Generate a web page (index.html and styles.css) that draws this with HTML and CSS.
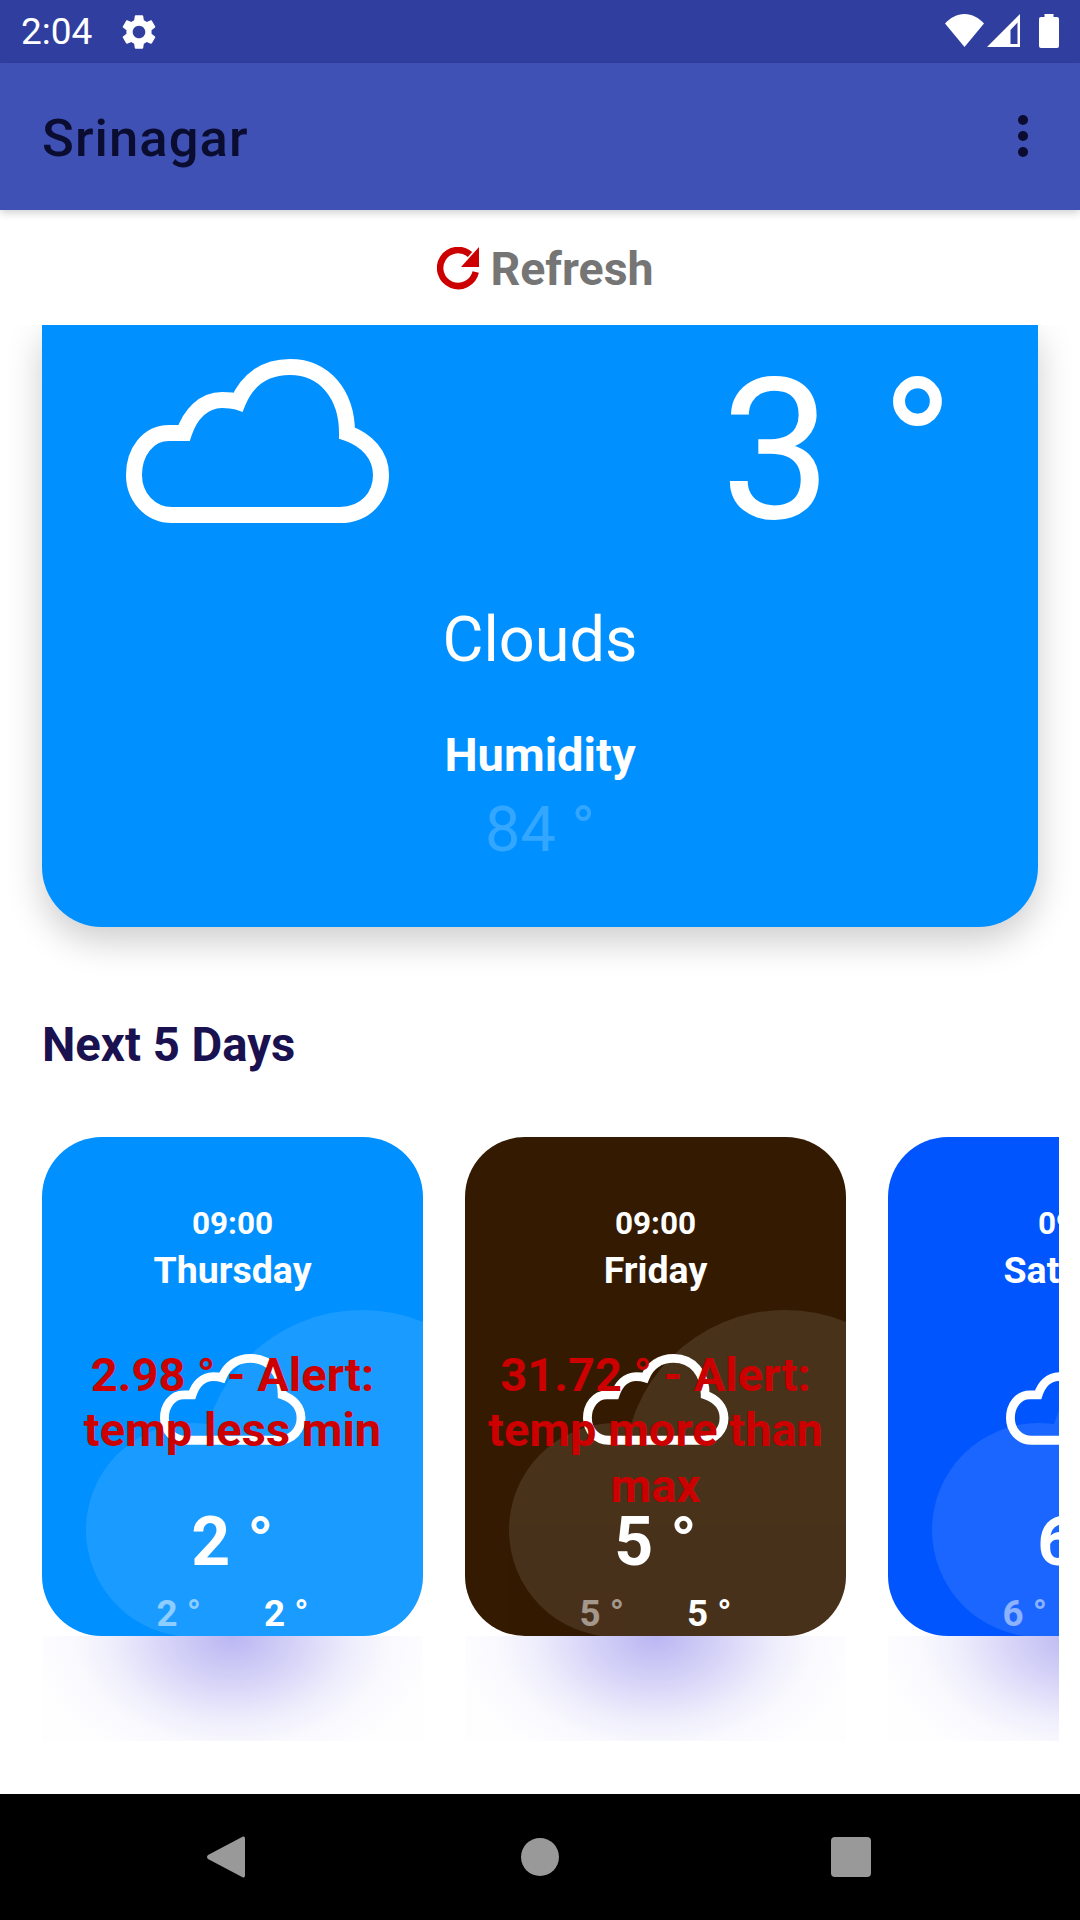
FILE: index.html
```html
<!DOCTYPE html>
<html lang="en">
<head>
<meta charset="utf-8">
<title>Srinagar</title>
<link rel="stylesheet" href="styles.css">
</head>
<body>
<svg class="defs" width="0" height="0" aria-hidden="true">
  <defs>
    <symbol id="cloud" viewBox="126 358 264 165">
      <path d="M172 515H340C366 515 381 496 381 475C381 455 367 440 347 433C347 395 325 367 290 367C265 367 247 380 238 402C232 400 227 400 222 400C203 400 190 415 184 433C179 433 174 433 169 433C148 433 134 452 134 475C134 497 150 515 172 515Z" fill="none" stroke="#fff" stroke-width="16"/>
    </symbol>
    <symbol id="blob" viewBox="0 0 381 499" preserveAspectRatio="none">
      <g fill="#fff" opacity="0.1">
        <circle cx="320" cy="334" r="161"/>
        <circle cx="151" cy="393" r="107"/>
        <rect x="151" y="334" width="230" height="165"/>
      </g>
    </symbol>
  </defs>
</svg>
<div class="statusbar">
  <span class="clock">2:04</span>
  <svg class="gear" viewBox="0 0 24 24"><path fill="#fff" d="M19.14,12.94c0.04,-0.3 0.06,-0.61 0.06,-0.94c0,-0.32 -0.02,-0.64 -0.07,-0.94l2.03,-1.58c0.18,-0.14 0.23,-0.41 0.12,-0.61l-1.92,-3.32c-0.12,-0.22 -0.37,-0.29 -0.59,-0.22l-2.39,0.96c-0.5,-0.38 -1.03,-0.7 -1.62,-0.94L14.4,2.81c-0.04,-0.24 -0.24,-0.41 -0.48,-0.41h-3.84c-0.24,0 -0.43,0.17 -0.47,0.41L9.25,5.35C8.66,5.59 8.12,5.92 7.63,6.29L5.24,5.33c-0.22,-0.08 -0.47,0 -0.59,0.22L2.74,8.87C2.62,9.08 2.66,9.34 2.86,9.48l2.03,1.58C4.84,11.36 4.8,11.69 4.8,12s0.02,0.64 0.07,0.94l-2.03,1.58c-0.18,0.14 -0.23,0.41 -0.12,0.61l1.92,3.32c0.12,0.22 0.37,0.29 0.59,0.22l2.39,-0.96c0.5,0.38 1.03,0.7 1.62,0.94l0.36,2.54c0.05,0.24 0.24,0.41 0.48,0.41h3.84c0.24,0 0.44,-0.17 0.47,-0.41l0.36,-2.54c0.59,-0.24 1.13,-0.56 1.62,-0.94l2.39,0.96c0.22,0.08 0.47,0 0.59,-0.22l1.92,-3.32c0.12,-0.22 0.07,-0.47 -0.12,-0.61L19.14,12.94zM12,15.6c-1.98,0 -3.6,-1.62 -3.6,-3.6s1.62,-3.6 3.6,-3.6s3.6,1.62 3.6,3.6S13.98,15.6 12,15.6z"/></svg>
  <span class="spacer"></span>
  <svg class="wifi" viewBox="0 0 39 33"><path fill="#fff" d="M19.5 33L0 9.5C5 4 12 0 19.5 0S34 4 39 9.5Z"/></svg>
  <svg class="signal" viewBox="0 0 33 33"><path fill="#fff" fill-rule="evenodd" d="M33 0V33H0ZM23.500 30H30.500V8.500L23.500 16Z"/></svg>
  <svg class="battery" viewBox="0 0 20 34"><path fill="#fff" d="M5.500 0H14.500V3H18A2 2 0 0 1 20 5V32A2 2 0 0 1 18 34H2A2 2 0 0 1 0 32V5A2 2 0 0 1 2 3H5.500Z"/></svg>
</div>
<header class="appbar">
  <h1 class="title">Srinagar</h1>
  <div class="menu"><i></i><i></i><i></i></div>
</header>
<main class="content">
  <div class="refresh">
    <svg class="refresh-icon" viewBox="0 0 43 43">
      <path d="M33 7.500A18 18 0 1 0 38.700 25" fill="none" stroke="#cc0000" stroke-width="6.5"/>
      <path d="M42 0V20H24Z" fill="#cc0000"/>
    </svg>
    <span class="refresh-label">Refresh</span>
  </div>
  <section class="hero">
    <div class="hero-top">
      <svg class="hero-cloud"><use href="#cloud"/></svg>
      <div class="hero-temp">3 °</div>
    </div>
    <div class="hero-cond">Clouds</div>
    <div class="hero-hum">Humidity</div>
    <div class="hero-humval">84 °</div>
  </section>
  <h2 class="next">Next 5 Days</h2>
  <div class="days">
    <div class="day">
      <article class="card card-blue">
        <svg class="blob"><use href="#blob"/></svg>
        <div class="time">09:00</div>
        <div class="weekday">Thursday</div>
        <div class="mid">
          <svg class="mini-cloud"><use href="#cloud"/></svg>
          <div class="alert">2.98 ° - Alert: temp less min</div>
        </div>
        <div class="temp">2 °</div>
        <div class="range"><span class="low">2 °</span><span>2 °</span></div>
      </article>
      <div class="glow"></div>
    </div>
    <div class="day">
      <article class="card card-brown">
        <svg class="blob"><use href="#blob"/></svg>
        <div class="time">09:00</div>
        <div class="weekday">Friday</div>
        <div class="mid">
          <svg class="mini-cloud"><use href="#cloud"/></svg>
          <div class="alert">31.72 ° - Alert: temp more than max</div>
        </div>
        <div class="temp">5 °</div>
        <div class="range"><span class="low">5 °</span><span>5 °</span></div>
      </article>
      <div class="glow"></div>
    </div>
    <div class="day">
      <article class="card card-royal">
        <svg class="blob"><use href="#blob"/></svg>
        <div class="time">09:00</div>
        <div class="weekday">Saturday</div>
        <div class="mid">
          <svg class="mini-cloud"><use href="#cloud"/></svg>
        </div>
        <div class="temp">6 °</div>
        <div class="range"><span class="low">6 °</span><span>6 °</span></div>
      </article>
      <div class="glow"></div>
    </div>
  </div>
</main>
<nav class="navbar">
  <svg class="nav-back" viewBox="0 0 38 42"><path fill="#999" d="M36 0.500Q38 0 38 2.500V39.500Q38 42 36 41.500L1 23Q-1 21 1 19Z"/></svg>
  <span class="nav-home"></span>
  <span class="nav-recent"></span>
</nav>
</body>
</html>
```
FILE: styles.css
```css
* { box-sizing: border-box; }
html, body { margin: 0; padding: 0; }
body {
  width: 1080px;
  height: 1920px;
  display: flex;
  flex-direction: column;
  overflow: hidden;
  background: #fff;
  font-family: Roboto, "Noto Sans", sans-serif;
}
.defs { position: absolute; }

.statusbar {
  height: 63px;
  flex: none;
  background: #303f9f;
  display: flex;
  align-items: center;
  padding: 0 21px;
  color: #fff;
}
.clock { font-size: 37px; line-height: 63px; }
.gear { width: 42px; height: 42px; margin-left: 26px; }
.spacer { flex: 1; }
.wifi { width: 39px; height: 33px; margin-top: -3px; }
.signal { width: 33px; height: 33px; margin-left: 3px; margin-top: -3px; }
.battery { width: 20px; height: 34px; margin-left: 19px; margin-top: -2px; }

.appbar {
  height: 147px;
  flex: none;
  background: #3f51b5;
  display: flex;
  align-items: center;
  justify-content: space-between;
  padding: 0 52px 0 42px;
  position: relative;
  z-index: 2;
  box-shadow: 0 3px 8px rgba(0, 0, 0, .18);
}
.title {
  margin: 0;
  font-size: 52.5px;
  font-weight: 500;
  color: #0a0c30;
  letter-spacing: 1.1px;
  position: relative;
  top: 1px;
}
.menu { display: flex; flex-direction: column; gap: 5.5px; margin-top: -1px; }
.menu i { width: 10.5px; height: 10.5px; border-radius: 50%; background: #0a0c30; display: block; }

.content { flex: 1; min-height: 0; overflow: hidden; }

.refresh {
  height: 115px;
  background: #fff;
  display: flex;
  align-items: center;
  justify-content: center;
  gap: 10px;
  position: relative;
  z-index: 1;
  padding: 2px 0 0 11px;
}
.refresh-icon { width: 43px; height: 43px; }
.refresh-label { font-size: 46.5px; font-weight: 700; color: #757575; }

.hero {
  margin: 0 42px;
  height: 602px;
  background: #0090ff;
  border-radius: 0 0 60px 60px;
  box-shadow: 0 14px 36px rgba(0, 0, 0, .2);
  color: #fff;
  text-align: center;
}
.hero-top {
  display: flex;
  justify-content: space-between;
  padding: 33px 84px 0 84px;
  height: 278px;
}
.hero-cloud { width: 264px; height: 165px; }
.hero-temp { font-size: 197px; line-height: 186px; font-weight: 400; }
.hero-cond { font-size: 63px; line-height: 74px; font-weight: 400; }
.hero-hum { font-size: 47px; line-height: 54px; font-weight: 700; margin-top: 51px; }
.hero-humval { font-size: 63px; line-height: 74px; font-weight: 400; opacity: .2; margin-top: 11px; }

.next {
  margin: 91px 0 0 42px;
  font-size: 47.25px;
  line-height: 54px;
  font-weight: 700;
  color: #1a1150;
}

.days {
  display: flex;
  gap: 42px;
  width: 1059px;
  padding-left: 42px;
  margin-top: 65px;
  overflow: hidden;
}
.day { flex: none; width: 381px; }
.card {
  position: relative;
  height: 499px;
  border-radius: 60px;
  overflow: hidden;
  color: #fff;
  text-align: center;
  padding-top: 68px;
}
.card-blue { background: #0090ff; }
.card-brown { background: #341a00; }
.card-royal { background: #0055ff; }
.blob { position: absolute; inset: 0; width: 100%; height: 100%; }
.time, .weekday, .mid, .temp, .range { position: relative; }
.time { font-size: 31.5px; line-height: 37px; font-weight: 700; }
.weekday { font-size: 37.5px; line-height: 43px; font-weight: 700; margin-top: 7px; }
.mid { height: 210px; }
.mini-cloud {
  position: absolute;
  left: 118px;
  top: 61px;
  width: 146px;
  height: 92px;
}
.alert {
  position: relative;
  padding: 55px 21px 0;
  font-size: 47px;
  line-height: 55.4px;
  font-weight: 700;
  color: #cc0000;
}
.temp { font-size: 68px; line-height: 80px; font-weight: 700; }
.range {
  display: flex;
  justify-content: center;
  gap: 63px;
  font-size: 36.750px;
  line-height: 43px;
  font-weight: 700;
  margin-top: 10px;
}
.low { opacity: .5; }
.glow {
  height: 105px;
  background: radial-gradient(ellipse 200px 140px at 50% 0, rgba(90, 80, 225, .42), rgba(90, 80, 225, .24) 35%, rgba(90, 80, 225, .1) 60%, rgba(90, 80, 225, .03) 80%, rgba(90, 80, 225, .008) 100%);
}

.navbar {
  height: 126px;
  flex: none;
  background: #000;
  display: flex;
  align-items: center;
  padding-left: 207px;
}
.nav-back { width: 38px; height: 42px; }
.nav-home {
  width: 38px;
  height: 38px;
  border-radius: 50%;
  background: #999;
  margin-left: 276px;
}
.nav-recent {
  width: 40px;
  height: 40px;
  border-radius: 4px;
  background: #999;
  margin-left: 272px;
}
```
